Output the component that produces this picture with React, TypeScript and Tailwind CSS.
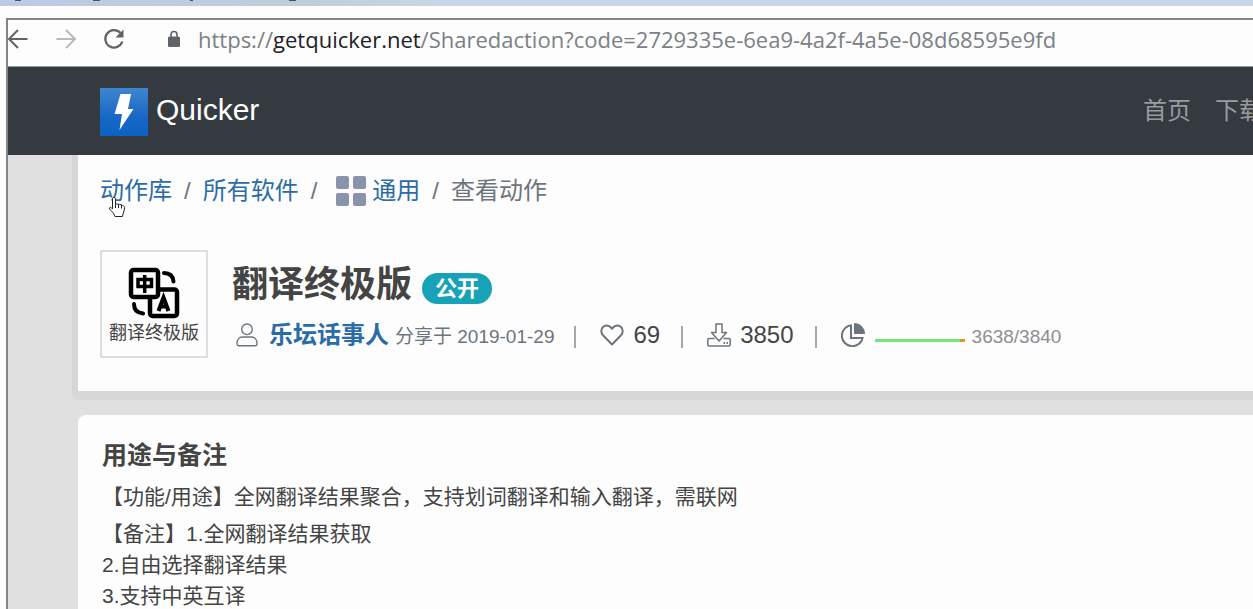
import { Fragment } from 'react'

const notes = ['2.自由选择翻译结果', '3.支持中英互译']

function BackIcon() {
  return (
    <svg className="h-6 w-6" viewBox="0 0 24 24" fill="none" stroke="currentColor" strokeWidth="2">
      <path d="M21.5 12H3.5M12 3L3 12l9 9" />
    </svg>
  )
}

function ReloadIcon() {
  return (
    <svg className="h-6 w-6" viewBox="0 0 24 24" fill="none">
      <path d="M20.3 14.5A8.7 8.7 0 1 1 18.5 6" stroke="currentColor" strokeWidth="2.2" />
      <path d="M21.5 2.5v8h-8z" fill="currentColor" />
    </svg>
  )
}

function LockIcon() {
  return (
    <svg className="h-[18px] w-3" viewBox="0 0 12 18" fill="none">
      <path d="M3 7V4.5a3 3 0 0 1 6 0V7" stroke="currentColor" strokeWidth="1.6" />
      <rect y="6.5" width="12" height="10.5" rx="1.5" fill="currentColor" />
    </svg>
  )
}

function BoltLogo() {
  return (
    <svg className="h-12 w-12" viewBox="0 0 48 48">
      <defs>
        <linearGradient id="bolt" x1="0" y1="0" x2="0" y2="1">
          <stop offset="0" stopColor="#3f86cf" />
          <stop offset="0.55" stopColor="#1a69c6" />
          <stop offset="1" stopColor="#0a62c4" />
        </linearGradient>
      </defs>
      <rect width="48" height="48" fill="url(#bolt)" />
      <path d="M20.500 6H31l-3 15h5.500L19.500 42 22 26h-7.500z" fill="#fff" />
    </svg>
  )
}

function TranslateIcon() {
  return (
    <svg className="h-[52px] w-[52px]" viewBox="0 0 52 52" fill="none" stroke="#000" strokeWidth="4.5">
      <rect x="3" y="3" width="27" height="27" rx="2.5" />
      <path d="M30 22.5h16.500a2.500 2.500 0 0 1 2.500 2.500v21.500a2.500 2.500 0 0 1-2.500 2.500h-22a2.500 2.500 0 0 1-2.500-2.500V30" />
      <path d="M10 12.500h13.500v7H10zM16.700 8v18" strokeWidth="3.5" />
      <path d="M30.500 44l5-13.500 5 13.500M32 39.500h7" strokeWidth="4" />
      <path d="M36 6c5.500 0 9 3 9.500 8.500M6 37c0 6 3 9 9 9.500" strokeWidth="4" strokeLinecap="round" />
    </svg>
  )
}

function UserIcon() {
  return (
    <svg className="h-6 w-6" viewBox="0 0 24 24" fill="none" stroke="currentColor" strokeWidth="1.4">
      <circle cx="12" cy="6.3" r="5.3" />
      <path d="M7.500 14h9c3.500 0 5.500 3 5.500 6.500 0 1.500-.5 2.200-2 2.200H4c-1.500 0-2-.7-2-2.200C2 17 4 14 7.500 14z" />
    </svg>
  )
}

function HeartIcon() {
  return (
    <svg className="h-6 w-6" viewBox="0 0 24 24" fill="none" stroke="currentColor" strokeWidth="2" strokeLinejoin="round">
      <path d="M12 21.500L3 12.300C.7 9.800.8 6 3 4c2.300-2.200 5.700-1.900 7.900.5L12 5.700l1.100-1.200C15.300 2.100 18.700 1.800 21 4c2.200 2 2.300 5.800 0 8.300z" />
    </svg>
  )
}

function DownloadIcon() {
  return (
    <svg className="h-6 w-6" viewBox="0 0 24 24" fill="none" stroke="currentColor" strokeWidth="1.5" strokeLinejoin="round">
      <path d="M9 1h6v8.500h4.500L12 18 4.500 9.500H9z" />
      <path d="M7.500 15.500H2c-.8 0-1.200.4-1.200 1.200v5c0 .8.4 1.200 1.200 1.200h20c.8 0 1.200-.4 1.200-1.200v-5c0-.8-.4-1.200-1.200-1.200h-5.500" />
      <path d="M16.500 20H18M19.500 20H21" strokeWidth="2" />
    </svg>
  )
}

function PieIcon() {
  return (
    <svg className="h-6 w-6" viewBox="0 0 24 24" fill="none" stroke="currentColor" strokeWidth="2">
      <path d="M11 2.200A10.500 10.500 0 1 0 21.800 14" />
      <path d="M10 3v12h11.500" />
      <path d="M13 0a11 11 0 0 1 11 11H13z" fill="currentColor" stroke="none" />
    </svg>
  )
}

function HandCursor() {
  return (
    <svg className="absolute left-2 top-[23px] h-[22px] w-[18px]" viewBox="0 0 18 22">
      <path
        d="M6 1.500c1 0 1.500.5 1.500 1.500v5c3 0 9 1 9 3.500 0 4-1.500 5-2 9H7c-.5-2.500-3-5-5.500-7.500-.5-1 .5-2 1.500-1.500l1.500 1.500V3c0-1 .5-1.500 1.500-1.500z"
        fill="#fff"
        stroke="#1f2430"
      />
      <path d="M7.500 8v4M10.500 8.500V12M13.500 9v3.500" stroke="#1f2430" />
    </svg>
  )
}

function TabStrip() {
  return (
    <div className="h-[6px] bg-gradient-to-r from-[#bccbe4] via-[#c0ceda] via-25% to-[#c8d7e5] to-35%">
      <svg className="block h-[2px] w-80" viewBox="0 0 320 2" fill="#44536b">
        <rect x="15" width="6" height="1" />
        <rect x="93" width="7" height="1" />
        <rect x="190" width="3" height="1" />
        <rect x="289" width="7" height="1" />
      </svg>
    </div>
  )
}

function Divider() {
  return <span className="mt-1 h-[22px] w-[2px] bg-[#a5a8ab]" />
}

export default function App() {
  return (
    <div className="h-screen overflow-hidden bg-[#fdfdfd] font-['Liberation_Sans','Noto_Sans_CJK_SC',sans-serif] text-[#444]">
      <TabStrip />
      <div className="ml-[6px] mt-3 h-full border-l-2 border-t-2 border-[#858585] bg-[#e0e0e0]">
        <div className="flex h-[47px] items-center border-b border-[#9a9a9a] bg-[#fdfdfd] pb-[9px] text-[#5f6368]">
          <button aria-label="Back" className="-ml-[2px]"><BackIcon /></button>
          <button aria-label="Forward" className="ml-6 rotate-180 text-[#b8babd]"><BackIcon /></button>
          <button aria-label="Reload" className="ml-6"><ReloadIcon /></button>
          <span className="ml-[42px]"><LockIcon /></span>
          <div className="ml-[18px] whitespace-nowrap font-['Open_Sans',sans-serif] text-[22px] leading-8 text-[#7b8084]">
            https://<span className="text-[#202124]">getquicker.net</span>/Sharedaction?code=2729335e-6ea9-4a2f-4a5e-08d68595e9fd
          </div>
        </div>

        <header className="flex h-[88px] items-center bg-[#343a40] pl-[92px]">
          <a href="#" className="flex items-center gap-2 pt-px text-[30px] leading-9 text-white">
            <BoltLogo />
            <span className="pb-1">Quicker</span>
          </a>
          <nav className="-mr-[10px] ml-auto flex shrink-0 gap-6 text-2xl text-[#999c9f]">
            <a href="#">首页</a>
            <a href="#">下载</a>
          </nav>
        </header>

        <main className="ml-[70px]">
          <section className="h-[236px] bg-[#fdfdfd] pl-[22px] pt-[18px] shadow-[0_3px_0_6px_#d7d7d7] [clip-path:inset(0_0_-9px_-6px_round_0_0_0_6px)]">
            <nav aria-label="breadcrumb" className="relative flex items-center gap-3 text-2xl leading-9 text-[#6c757d]">
              <a href="#" className="text-[#2c6ca5]">动作库</a>
              <span>/</span>
              <a href="#" className="text-[#2c6ca5]">所有软件</a>
              <span>/</span>
              <a href="#" className="ml-[7px] flex items-center gap-[6px] text-[#2c6ca5]">
                <span className="grid grid-cols-2 gap-1">
                  {[0, 1, 2, 3].map((n) => (
                    <span key={n} className="h-[13px] w-[13px] rounded-xs bg-[#8794ab]" />
                  ))}
                </span>
                通用
              </a>
              <span>/</span>
              <span>查看动作</span>
              <HandCursor />
            </nav>

            <div className="mt-[41px] flex gap-6">
              <div className="flex h-[108px] w-[108px] flex-col items-center border-2 border-[#dedede] pt-[15px]">
                <TranslateIcon />
                <span className="whitespace-nowrap text-lg leading-7">翻译终极版</span>
              </div>
              <div>
                <h1 className="flex items-center gap-[10px] pt-[9px] text-4xl leading-[52px] font-bold">
                  翻译终极版
                  <span className="mt-[6px] rounded-full bg-[#17a2b8] px-[13px] text-[22px] leading-[31px] text-white">公开</span>
                </h1>
                <div className="flex h-12 items-center whitespace-nowrap text-2xl text-[#6c757d]">
                  <span className="ml-[3px]"><UserIcon /></span>
                  <a href="#" className="ml-[10px] font-bold text-[#2c6ca5]">乐坛话事人</a>
                  <span className="ml-[6px] mr-5 pt-1 text-[19px]">分享于 2019-01-29</span>
                  <Divider />
                  <span className="ml-6 mr-[21px] flex items-center gap-[9px]">
                    <HeartIcon />
                    <span className="text-[#444]">69</span>
                  </span>
                  <Divider />
                  <span className="ml-6 mr-[21px] flex items-center gap-[9px]">
                    <DownloadIcon />
                    <span className="text-[#444]">3850</span>
                  </span>
                  <Divider />
                  <span className="ml-6 flex items-center">
                    <PieIcon />
                    <span className="ml-[10px] mr-[7px] mt-3 flex h-[3px] w-[90px] bg-[#d89b22]">
                      <span className="w-[85px] bg-[#76e278]" />
                    </span>
                    <span className="pt-1 text-[19px] text-[#8b8f93]">3638/3840</span>
                  </span>
                </div>
              </div>
            </div>
          </section>

          <section className="mt-6 h-80 rounded-tl-lg bg-[#fdfdfd] pl-6 pt-[22px]">
            <h2 className="text-[25px] leading-9 font-bold">用途与备注</h2>
            <div className="text-[21px] leading-[31px]">
              <p className="mt-2">【功能/用途】全网翻译结果聚合，支持划词翻译和输入翻译，需联网</p>
              <p className="mt-[6px]">
                【备注】1.全网翻译结果获取
                {notes.map((line) => (
                  <Fragment key={line}>
                    <br />
                    {line}
                  </Fragment>
                ))}
              </p>
            </div>
          </section>
        </main>
      </div>
    </div>
  )
}
